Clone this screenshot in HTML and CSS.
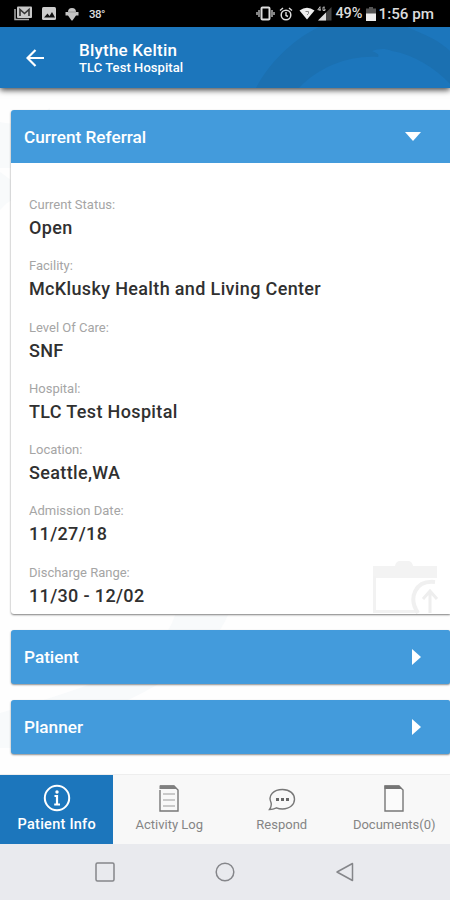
FILE: index.html
```html
<!DOCTYPE html>
<html lang="en">
<head>
<meta charset="utf-8">
<title>Patient Info</title>
<link rel="stylesheet" href="styles.css">
</head>
<body>
<div class="screen">
  <div class="status">
    <div class="notices">
      <svg width="19" height="15" viewBox="0 0 19 15"><path d="M1 3v10.500h14" fill="none" stroke="#aaa" stroke-width="1.500"/><rect x="3" y="0.500" width="15" height="11.500" rx="1" fill="#c8c8c8"/><path d="M6 10V3.500l4.500 4 4.500-4V10" fill="none" stroke="#333" stroke-width="1.600"/></svg>
      <svg width="14" height="13" viewBox="0 0 14 13"><rect width="14" height="13" rx="1.500" fill="#ccc"/><path d="M2 10.500l3.500-4 2 2.500 2.500-4 3 5.500z" fill="#111"/></svg>
      <svg width="14" height="14" viewBox="0 0 14 14"><path d="M3 5a4 4 0 0 1 8 0h2.500v3.500H11L7.500 13.500h-1L3 8.500H.5V5z" fill="#c4c4c4"/><path d="M3 5h8" stroke="#888" stroke-width=".7"/></svg>
      <span class="temp">38°</span>
    </div>
    <div class="signals">
      <svg width="19" height="15" viewBox="0 0 19 15"><rect x="5.500" y="1.500" width="8" height="12" rx="1" fill="none" stroke="#ddd" stroke-width="2"/><path d="M3 4v7M16 4v7M1 6v3M18 6v3" stroke="#ccc" stroke-width="1.300"/></svg>
      <svg width="14" height="14" viewBox="0 0 14 14"><circle cx="7" cy="8" r="4.800" fill="none" stroke="#ddd" stroke-width="1.500"/><path d="M7 5v3.500l2 1M1 3.500L4 1M13 3.500L10 1" fill="none" stroke="#ddd" stroke-width="1.400"/></svg>
      <svg class="wifi" width="16" height="13" viewBox="0 0 16 13"><path d="M.5 3.500Q8-2 15.500 3.500L8 12.500z" fill="#eee"/><path d="M6.500 4.500h3v2L8 8" fill="none" stroke="#888"/></svg>
      <svg class="cell" width="15" height="15" viewBox="0 0 15 15"><path d="M14.500 1v13.500H1z" fill="#444"/><path d="M9 6.500v8H1z" fill="#ddd"/><path d="M3 .7L.8 3.800h3M3 .7V5M8 1.200H6v3.300h2V3H7" fill="none" stroke="#ccc" stroke-width=".9"/></svg>
      <span class="percent">49%</span>
      <svg class="battery" width="10" height="14" viewBox="0 0 10 14"><path d="M3 0h4v1.500h3V14H0V1.500h3z" fill="#555"/><path d="M0 6.500h10V14H0z" fill="#eee"/></svg>
      <span class="clock">1:56 pm</span>
    </div>
  </div>
  <header class="header">
    <svg class="swirl" width="194" height="61" viewBox="0 0 194 61"><path d="M0 61C12 38 34 14 63 0H151C170 8 184 14 194 24V57C178 40 158 28 136 24C128 21 122 22 116 24C120 26 124 27 122 30C94 28 64 39 43 61z" fill="#1b70b1"/></svg>
    <svg class="back" width="19" height="18" viewBox="0 0 19 18"><path d="M18 9H2M9.500 1L1.500 9l8 8" fill="none" stroke="#fff" stroke-width="2.200"/></svg>
    <div class="who"><div class="name">Blythe Keltin</div><div class="place">TLC Test Hospital</div></div>
  </header>
  <main class="content">
    <svg class="backdrop" width="450" height="686" viewBox="0 0 450 686"><path d="M0 34Q24 40 50 20V80H0zM0 84q12 8 22 18v10Q12 108 0 122zM0 660V625Q70 605 120 585Q165 560 175 527H228Q205 580 110 620Q50 645 20 660z" fill="#f8fafb"/></svg>
    <section class="card">
      <h2 class="bar"><span class="bar-title current">Current Referral</span><svg class="down" width="16" height="9" viewBox="0 0 16 9"><path d="M0 0h16L8 9z" fill="#fff"/></svg></h2>
      <dl class="details">
        <div class="item"><dt>Current Status:</dt><dd>Open</dd></div>
        <div class="item"><dt>Facility:</dt><dd>McKlusky Health and Living Center</dd></div>
        <div class="item"><dt>Level Of Care:</dt><dd>SNF</dd></div>
        <div class="item"><dt>Hospital:</dt><dd>TLC Test Hospital</dd></div>
        <div class="item"><dt>Location:</dt><dd>Seattle,WA</dd></div>
        <div class="item"><dt>Admission Date:</dt><dd>11/27/18</dd></div>
        <div class="item"><dt>Discharge Range:</dt><dd>11/30 - 12/02</dd></div>
      </dl>
      <svg class="watermark" width="68" height="53" viewBox="0 0 68 53"><path d="M1 5h22q1-5 5-5h8q4 0 5 5h24v12H1z" fill="#f3f3f3"/><path d="M2.500 15v35.500H46" fill="none" stroke="#f2f2f2" stroke-width="3"/><path d="M63 21c-20-2-27 16-17 31" fill="none" stroke="#f0f0f0" stroke-width="4"/><path d="M58 52V30M51 38l7-8 7 8" fill="none" stroke="#eee" stroke-width="3"/></svg>
    </section>
    <section class="bar closed"><span class="bar-title">Patient</span><svg class="right" width="9" height="16" viewBox="0 0 9 16"><path d="M0 0l9 8-9 8z" fill="#fff"/></svg></section>
    <section class="bar closed"><span class="bar-title">Planner</span><svg class="right" width="9" height="16" viewBox="0 0 9 16"><path d="M0 0l9 8-9 8z" fill="#fff"/></svg></section>
  </main>
  <nav class="tabs">
    <div class="tab active"><svg width="28" height="28" viewBox="0 0 28 28"><circle cx="14" cy="14" r="12.200" fill="none" stroke="#fff" stroke-width="2"/><circle cx="14" cy="8" r="1.700" fill="#fff"/><path d="M11.500 12H14v8M11.200 20.500h5.800" fill="none" stroke="#fff" stroke-width="2.200"/></svg><span>Patient Info</span></div>
    <div class="tab"><svg width="28" height="28" viewBox="0 0 28 28"><path d="M5 2h14l4 4v21H5V6" fill="none" stroke="#777" stroke-width="1.400"/><path d="M4.500 1.500H19L22 5H4.500z" fill="#808080"/><path d="M8 10h12M8 16h12M8 22h12" stroke="#999" stroke-width="1.200"/></svg><span class="t-log">Activity Log</span></div>
    <div class="tab"><svg width="28" height="28" viewBox="0 0 28 28"><path d="M1.500 25.500Q4 22 3 18.500C-.5 11 6 5.500 14.500 5.500C22 5.500 26.500 10 26.500 15.200S22 25 14.500 25Q11 25 8.500 23.800Q5 25.500 1.500 25.500z" fill="none" stroke="#777" stroke-width="1.400"/><path d="M8 14h3v3H8zM13 14h3v3h-3zM18 14h3v3h-3z" fill="#666"/></svg><span class="t-respond">Respond</span></div>
    <div class="tab"><svg width="28" height="28" viewBox="0 0 28 28"><path d="M5 2h14l4 4v21H5z" fill="#fbfbfb" stroke="#777" stroke-width="1.400"/><path d="M4.500 1.500H19L22 5H4.500z" fill="#757575"/></svg><span class="t-docs">Documents(0)</span></div>
  </nav>
  <div class="system">
    <svg width="20" height="20" viewBox="0 0 20 20"><rect x="1" y="1" width="18" height="18" rx="1.500" fill="none" stroke="#85868a" stroke-width="1.500"/></svg>
    <svg width="20" height="20" viewBox="0 0 20 20"><circle cx="10" cy="10" r="8.800" fill="none" stroke="#85868a" stroke-width="1.500"/></svg>
    <svg width="20" height="20" viewBox="0 0 20 20"><path d="M17.500 1.500v17L2 10z" fill="none" stroke="#85868a" stroke-width="1.500" stroke-linejoin="round"/></svg>
  </div>
</div>
</body>
</html>
```
FILE: styles.css
```css
* { box-sizing: border-box; }
body { margin: 0; font-family: Roboto, "Liberation Sans", sans-serif; }
svg { display: block; flex: none; }
span, dt, dd, .name, .place { white-space: nowrap; }
.screen { width: 450px; height: 900px; display: flex; flex-direction: column; overflow: hidden; background: #fefefe; }

.status { height: 27px; flex: none; background: #000; color: #dcdcdc; display: flex; justify-content: space-between; align-items: center; padding: 0 16px 0 14px; }
.notices, .signals { display: flex; align-items: center; }
.notices { gap: 9px; }
.temp { font-size: 11.500px; font-weight: 500; letter-spacing: -.5px; margin-left: 1px; }
.signals svg { margin-right: 4px; }
.signals .wifi { margin-left: 2px; margin-right: 2px; }
.signals .cell { margin-right: 3px; }
.signals .battery { margin-right: 3px; }
.percent { font-size: 14.500px; font-weight: 500; margin-right: 3px; }
.clock { font-size: 15.200px; font-weight: 500; }

.header { position: relative; z-index: 2; height: 61px; flex: none; display: flex; align-items: center; gap: 34px; padding-left: 26px; background: #1c76bc; color: #fff; box-shadow: 0 2px 6px rgba(0,0,0,.75); }
.swirl { position: absolute; right: 0; top: 0; }
.name { font-size: 17px; line-height: 20px; font-weight: 500; letter-spacing: .22px; }
.place { font-size: 13px; line-height: 16px; font-weight: 500; letter-spacing: .07px; }

.content { position: relative; flex: none; height: 686px; padding: 22px 0 0 11px; display: flex; flex-direction: column; gap: 16px; }
.backdrop { position: absolute; left: 0; top: 0; }
.card { position: relative; height: 504px; background: #fff; border-radius: 3px 0 0 3px; box-shadow: 0 1px 2px rgba(0,0,0,.5); }
.bar { position: relative; margin: 0; height: 53px; display: flex; align-items: center; justify-content: space-between; padding: 0 29px 0 13px; background: #439bdc; color: #fff; border-radius: 3px 0 0 0; font-size: 17.200px; font-weight: 500; }
.closed { height: 54px; border-radius: 3px 2px 2px 3px; box-shadow: 0 1px 2px rgba(0,0,0,.45); }
.details { margin: 0; padding: 32px 0 0 18px; }
.item { height: 61.250px; }
dt { font-size: 13px; line-height: 20px; color: #a5a5a5; }
dd { margin: 0; font-size: 18px; line-height: 25px; font-weight: 500; letter-spacing: .35px; color: #303030; }
.watermark { position: absolute; right: 10px; bottom: 0; }

.tabs { height: 70px; flex: none; display: grid; grid-template-columns: repeat(4, 1fr); background: #f8f8f8; border-top: 1px solid #eee; }
.tab { display: flex; flex-direction: column; align-items: center; padding: 9px 0 0 1px; color: #858585; font-size: 13px; line-height: 20px; gap: 3px; }
.active { background: #1c76bc; color: #fff; font-size: 14.500px; font-weight: 500; letter-spacing: .25px; }
.system { flex: 1; background: #e9eaee; display: flex; justify-content: center; align-items: center; gap: 100px; }
```
